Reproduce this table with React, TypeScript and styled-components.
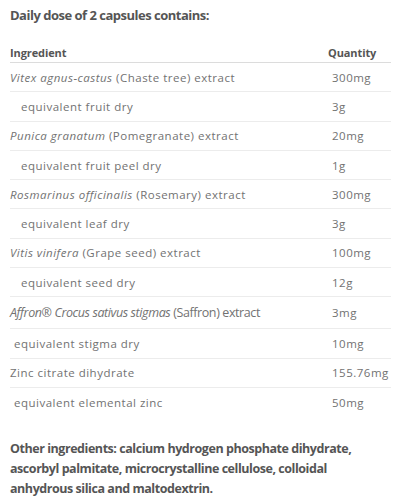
import React from "react";
import styled, { createGlobalStyle } from "styled-components";

const Global = createGlobalStyle`
  html, body { margin: 0; padding: 0; background: #ffffff; }
  body { font-family: "Open Sans", "DejaVu Sans", sans-serif; }
`;

const Page = styled.div`
  width: 400px;
  padding: 0 9px 0 10px;
  box-sizing: border-box;
`;

const Title = styled.h4`
  margin: 0;
  padding-top: 7px;
  height: 43px;
  box-sizing: border-box;
  font-size: 13px;
  line-height: 16px;
  font-weight: 700;
  letter-spacing: -0.5px;
  color: #555555;
`;

const Table = styled.table`
  width: 100%;
  border-collapse: collapse;
  table-layout: fixed;
`;

const HeadCell = styled.th<{ $qty?: boolean }>`
  text-align: left;
  font-size: 11px;
  font-weight: 700;
  letter-spacing: -0.1px;
  color: #555555;
  height: 19px;
  padding: 0;
  vertical-align: middle;
  border-bottom: 1.5px solid #dcdcdc;
  width: ${(p) => (p.$qty ? "63px" : "auto")};
`;

const Row = styled.tr<{ $last?: boolean; $tall?: boolean }>`
  height: ${(p) => (p.$tall ? "32px" : "29.3px")};
  border-bottom: ${(p) => (p.$last ? "none" : "1px solid #ececec")};
`;

const Cell = styled.td<{ $indent?: number; $qty?: boolean; $big?: boolean }>`
  padding: 0 0 0 ${(p) => (p.$qty ? 4 : p.$indent ?? 0)}px;
  font-size: ${(p) => (p.$big ? "12.5px" : "11.5px")};
  letter-spacing: ${(p) => (p.$big ? "-0.4px" : "0.5px")};
  color: #727272;
  font-weight: 400;
  vertical-align: middle;
  white-space: nowrap;
`;

const Latin = styled.em`
  font-style: italic;
`;

const Other = styled.p`
  margin: 22px 0 0 0;
  font-size: 12.5px;
  line-height: 20px;
  font-weight: 700;
  letter-spacing: -0.45px;
  color: #555555;
`;

type Item = {
  latin?: string;
  name: string;
  qty: string;
  indent?: number;
  big?: boolean;
};

const items: Item[] = [
  { latin: "Vitex agnus-castus", name: " (Chaste tree) extract", qty: "300mg" },
  { name: "equivalent fruit dry", qty: "3g", indent: 11 },
  { latin: "Punica granatum", name: " (Pomegranate) extract", qty: "20mg" },
  { name: "equivalent fruit peel dry", qty: "1g", indent: 11 },
  { latin: "Rosmarinus officinalis", name: " (Rosemary) extract", qty: "300mg" },
  { name: "equivalent leaf dry", qty: "3g", indent: 11 },
  { latin: "Vitis vinifera", name: " (Grape seed) extract", qty: "100mg" },
  { name: "equivalent seed dry", qty: "12g", indent: 11 },
  { latin: "Affron® Crocus sativus stigmas", name: " (Saffron) extract", qty: "3mg", big: true },
  { name: "equivalent stigma dry", qty: "10mg", indent: 4 },
  { name: "Zinc citrate dihydrate", qty: "155.76mg" },
  { name: "equivalent elemental zinc", qty: "50mg", indent: 4 },
];

export default function App() {
  return (
    <Page>
      <Global />
      <Title>Daily dose of 2 capsules contains:</Title>
      <Table>
        <thead>
          <tr>
            <HeadCell>Ingredient</HeadCell>
            <HeadCell $qty>Quantity</HeadCell>
          </tr>
        </thead>
        <tbody>
          {items.map((it, i) => (
            <Row key={i} $last={i === items.length - 1} $tall={it.big}>
              <Cell $indent={it.indent} $big={it.big}>
                {it.latin && <Latin>{it.latin}</Latin>}
                {it.name}
              </Cell>
              <Cell $qty>{it.qty}</Cell>
            </Row>
          ))}
        </tbody>
      </Table>
      <Other>
        Other ingredients: calcium hydrogen phosphate dihydrate, ascorbyl
        palmitate, microcrystalline cellulose, colloidal anhydrous silica and
        maltodextrin.
      </Other>
    </Page>
  );
}
